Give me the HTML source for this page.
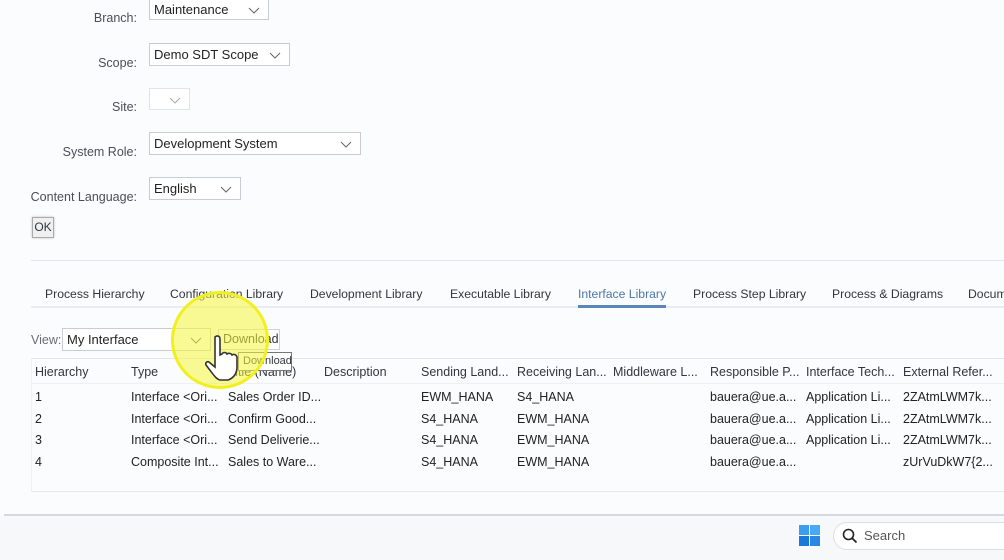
<!DOCTYPE html>
<html><head><meta charset="utf-8"><style>
body{margin:0;width:1004px;height:560px;overflow:hidden;background:#fbfcfd;font-family:"Liberation Sans",sans-serif;color:#32363a;position:relative}
.a{position:absolute;white-space:nowrap}
.lbl{position:absolute;right:867px;font-size:12.5px;color:#4a4f55}
.dd{position:absolute;background:#fff;border:1px solid #c9cdd1;box-sizing:border-box;font-size:13px;padding:3px 4px;color:#222}
.dd svg{position:absolute;right:8px;top:8px}
.tab{position:absolute;top:287px;font-size:12.2px;color:#32363a}
.th{font-size:12.5px;color:#32363a}
.td{font-size:12.5px;color:#222}
</style></head><body>
<div class="lbl" style="top:11px">Branch:</div>
<div class="dd" style="left:149px;top:-2px;width:120px;height:22px">Maintenance<svg width="12" height="7"><path d="M1 1l5 5 5-5" stroke="#666" fill="none"/></svg></div>
<div class="lbl" style="top:56px">Scope:</div>
<div class="dd" style="left:149px;top:43px;width:141px;height:23px">Demo SDT Scope<svg width="12" height="7"><path d="M1 1l5 5 5-5" stroke="#666" fill="none"/></svg></div>
<div class="lbl" style="top:100px">Site:</div>
<div class="dd" style="left:149px;top:88px;width:41px;height:22px;border-color:#e2e4e6"><svg width="12" height="7"><path d="M1 1l5 5 5-5" stroke="#aaa" fill="none"/></svg></div>
<div class="lbl" style="top:145px">System Role:</div>
<div class="dd" style="left:149px;top:132px;width:212px;height:23px">Development System<svg width="12" height="7"><path d="M1 1l5 5 5-5" stroke="#666" fill="none"/></svg></div>
<div class="lbl" style="top:190px">Content Language:</div>
<div class="dd" style="left:149px;top:177px;width:92px;height:23px">English<svg width="12" height="7"><path d="M1 1l5 5 5-5" stroke="#666" fill="none"/></svg></div>
<div class="a" style="left:32px;top:217px;width:22px;height:21px;border:1px solid #aaa;box-sizing:border-box;background:#f0f0f0;font-size:12px;text-align:center;line-height:19px;box-shadow:0 0 2px #bbb">OK</div>

<div class="a" style="left:31px;top:260px;width:973px;height:1px;background:#e3e6e9"></div>
<div class="a" style="left:31px;top:306px;width:973px;height:2px;background:#e8edf2"></div>
<div class="tab" style="left:45px">Process Hierarchy</div>
<div class="tab" style="left:170px">Configuration Library</div>
<div class="tab" style="left:310px">Development Library</div>
<div class="tab" style="left:450px">Executable Library</div>
<div class="tab" style="left:578px;color:#4b77a8">Interface Library</div>
<div class="a" style="left:578px;top:305px;width:88px;height:3px;background:#5b87b8"></div>
<div class="tab" style="left:693px">Process Step Library</div>
<div class="tab" style="left:832px">Process &amp; Diagrams</div>
<div class="tab" style="left:968px">Documents</div>

<div class="a" style="left:31px;top:333px;font-size:12.5px;color:#6a6d70">View:</div>
<div class="dd" style="left:62px;top:328px;width:149px;height:23px">My Interface<svg width="12" height="7"><path d="M1 1l5 5 5-5" stroke="#666" fill="none"/></svg></div>
<div class="a" style="left:218px;top:329px;width:62px;height:21px;border:1px solid #d0d3d6;box-sizing:border-box;background:#fff;font-size:12.5px;line-height:19px;padding-left:4px">Download</div>

<div class="a" style="left:31px;top:358px;width:973px;height:132px;border-top:1px solid #e3e6e9;border-bottom:1px solid #e8eaec;border-left:1px solid #eef0f2"></div>
<div class="a" style="left:31px;top:383px;width:973px;height:1px;background:#eef0f2"></div>
<div class="a th" style="left:35px;top:365px">Hierarchy</div>
<div class="a th" style="left:131px;top:365px">Type</div>
<div class="a th" style="left:228px;top:365px">Title (Name)</div>
<div class="a th" style="left:324px;top:365px">Description</div>
<div class="a th" style="left:421px;top:365px">Sending Land...</div>
<div class="a th" style="left:517px;top:365px">Receiving Lan...</div>
<div class="a th" style="left:613px;top:365px">Middleware L...</div>
<div class="a th" style="left:710px;top:365px">Responsible P...</div>
<div class="a th" style="left:806px;top:365px">Interface Tech...</div>
<div class="a th" style="left:903px;top:365px">External Refer...</div>

<div class="a td" style="left:35px;top:390px">1</div><div class="a td" style="left:131px;top:390px">Interface &lt;Ori...</div><div class="a td" style="left:228px;top:390px">Sales Order ID...</div><div class="a td" style="left:421px;top:390px">EWM_HANA</div><div class="a td" style="left:517px;top:390px">S4_HANA</div><div class="a td" style="left:710px;top:390px">bauera@ue.a...</div><div class="a td" style="left:806px;top:390px">Application Li...</div><div class="a td" style="left:903px;top:390px">2ZAtmLWM7k...</div>
<div class="a td" style="left:35px;top:412px">2</div><div class="a td" style="left:131px;top:412px">Interface &lt;Ori...</div><div class="a td" style="left:228px;top:412px">Confirm Good...</div><div class="a td" style="left:421px;top:412px">S4_HANA</div><div class="a td" style="left:517px;top:412px">EWM_HANA</div><div class="a td" style="left:710px;top:412px">bauera@ue.a...</div><div class="a td" style="left:806px;top:412px">Application Li...</div><div class="a td" style="left:903px;top:412px">2ZAtmLWM7k...</div>
<div class="a td" style="left:35px;top:433px">3</div><div class="a td" style="left:131px;top:433px">Interface &lt;Ori...</div><div class="a td" style="left:228px;top:433px">Send Deliverie...</div><div class="a td" style="left:421px;top:433px">S4_HANA</div><div class="a td" style="left:517px;top:433px">EWM_HANA</div><div class="a td" style="left:710px;top:433px">bauera@ue.a...</div><div class="a td" style="left:806px;top:433px">Application Li...</div><div class="a td" style="left:903px;top:433px">2ZAtmLWM7k...</div>
<div class="a td" style="left:35px;top:455px">4</div><div class="a td" style="left:131px;top:455px">Composite Int...</div><div class="a td" style="left:228px;top:455px">Sales to Ware...</div><div class="a td" style="left:421px;top:455px">S4_HANA</div><div class="a td" style="left:517px;top:455px">EWM_HANA</div><div class="a td" style="left:710px;top:455px">bauera@ue.a...</div><div class="a td" style="left:903px;top:455px">zUrVuDkW7{2...</div>

<div class="a" style="left:238px;top:352px;width:54px;height:19px;border:1px solid #777;background:#fff;box-sizing:border-box;font-size:11px;line-height:17px;padding-left:4px">Download</div>
<div class="a" style="left:171px;top:291px;width:98px;height:98px;border-radius:50%;background:rgba(245,245,60,0.55);border:3px solid #f2ef20;box-sizing:border-box"></div>
<svg class="a" style="left:205px;top:334px" width="40" height="48" viewBox="0 0 40 48"><path d="M10 3c2-2 5-1 5 2v16l2-1c1-2 4-2 5 0c1-1 4-1 5 1c1-1 4-1 5 2v10c0 6-3 11-9 13h-8c-4-1-7-6-11-11l-3-4c-1-2 1-4 3-3l6 5V5z" fill="#fff" stroke="#333" stroke-width="1.6"/></svg>

<div class="a" style="left:4px;top:514px;width:1000px;height:2px;background:#d6d9dc"></div>
<div class="a" style="left:0;top:516px;width:1004px;height:44px;background:#f7f8fa"></div>
<svg class="a" style="left:799px;top:525px" width="21" height="21"><rect x="0" y="0" width="10" height="10" fill="#3a9df0"/><rect x="11" y="0" width="10" height="10" fill="#4aa8f5"/><rect x="0" y="11" width="10" height="10" fill="#1a78d8"/><rect x="11" y="11" width="10" height="10" fill="#2a88e4"/></svg>
<div class="a" style="left:833px;top:522px;width:190px;height:28px;border-radius:14px;background:#fff;border:1px solid #dcdfe3;box-sizing:border-box"></div>
<svg class="a" style="left:842px;top:528px" width="16" height="16"><circle cx="6.5" cy="6.5" r="5" stroke="#222" stroke-width="1.6" fill="none"/><path d="M10 10l4.5 4.5" stroke="#222" stroke-width="1.8"/></svg>
<div class="a" style="left:864px;top:528px;font-size:13px;color:#555">Search</div>
</body></html>
